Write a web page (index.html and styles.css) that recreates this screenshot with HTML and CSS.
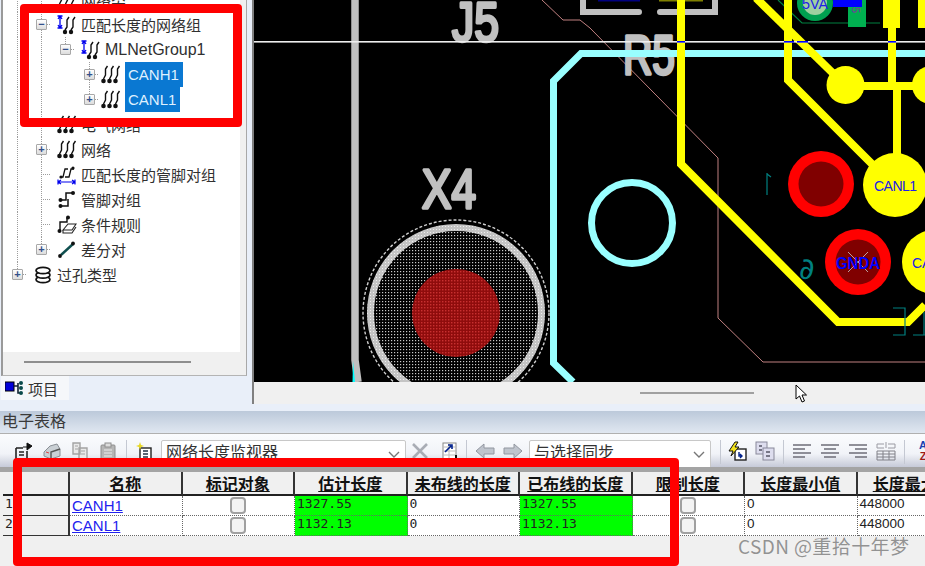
FILE: index.html
```html
<!DOCTYPE html>
<html lang="zh-CN">
<head>
<meta charset="utf-8">
<title>PCB</title>
<link rel="stylesheet" href="styles.css">
</head>
<body>
<svg class="defs" width="0" height="0">
  <defs>
    <symbol id="net" viewBox="0 0 20 20">
      <g fill="none" stroke="#111" stroke-width="1.4">
        <path d="M6.5 1 L4.5 4 V10 L2.5 14"/><path d="M12.5 1 L10.5 4 V10 L8.5 14"/><path d="M18.5 1 L16.5 4 V10 L14.5 14"/>
      </g>
      <circle cx="2.5" cy="16" r="2.3" fill="#111"/><circle cx="8.5" cy="16" r="2.3" fill="#111"/><circle cx="14.5" cy="16" r="2.3" fill="#111"/>
    </symbol>
    <symbol id="mlnet" viewBox="0 0 20 20">
      <path d="M3 1 V13 M0.5 1 H5.5 M0.5 13 H5.5 M3 1 L1 4 M3 1 L5 4 M3 13 L1 10 M3 13 L5 10" fill="none" stroke="#0000ee" stroke-width="1.3"/>
      <g fill="none" stroke="#111" stroke-width="1.4"><path d="M12 2 L10 5 V12 L8 15"/><path d="M18 2 L16 5 V12 L14 15"/></g>
      <circle cx="8" cy="17" r="2.2" fill="#111"/><circle cx="14" cy="17" r="2.2" fill="#111"/>
    </symbol>
    <symbol id="pinmatch" viewBox="0 0 20 20">
      <g fill="none" stroke="#111" stroke-width="1.3"><path d="M3 12 H6 L8 4 H11"/><path d="M8 12 H12 L14 4 H17"/></g>
      <circle cx="4" cy="12" r="1.6" fill="#111"/><circle cx="16" cy="3" r="1.6" fill="#111"/>
      <path d="M1 17 H18 M1 14.5 V19.5 M18 14.5 V19.5 M1 17 L4 15 M1 17 L4 19 M18 17 L15 15 M18 17 L15 19" fill="none" stroke="#0000ee" stroke-width="1.2"/>
    </symbol>
    <symbol id="pinpair" viewBox="0 0 20 20">
      <path d="M4 10 H9 V3 H15 M4 16 H11 V9" fill="none" stroke="#111" stroke-width="1.5"/>
      <circle cx="3.5" cy="10" r="2" fill="#111"/><circle cx="3.5" cy="16" r="2" fill="#111"/><circle cx="16" cy="3" r="2" fill="#111"/>
    </symbol>
    <symbol id="rule" viewBox="0 0 20 20">
      <path d="M3 16 V7 H10 V3" fill="none" stroke="#111" stroke-width="1.4"/>
      <circle cx="2.5" cy="16" r="2" fill="#111"/><circle cx="11" cy="2.5" r="2" fill="#111"/>
      <path d="M6 15 L11 9 H19 L15 15 Z M6 15 V18 H15 L19 12" fill="#fff" stroke="#222" stroke-width="1.1"/>
    </symbol>
    <symbol id="diff" viewBox="0 0 20 20">
      <path d="M4 15 L16 4" stroke="#0f4f4f" stroke-width="2.4"/>
      <circle cx="3" cy="16" r="1.9" fill="#111"/><circle cx="16" cy="3.5" r="1.9" fill="#111"/>
    </symbol>
    <symbol id="via" viewBox="0 0 20 20">
      <g fill="#fff" stroke="#111" stroke-width="1.7">
        <ellipse cx="10" cy="14.5" rx="7" ry="3.2"/><ellipse cx="10" cy="10" rx="7" ry="3.2"/><ellipse cx="10" cy="5.5" rx="7" ry="3.2"/>
      </g>
    </symbol>
    <pattern id="dots" width="3" height="3" patternUnits="userSpaceOnUse">
      <rect width="3" height="3" fill="#000"/><rect x="1" y="1" width="1.2" height="1.2" fill="#c8c8c8"/>
    </pattern>
    <pattern id="reddots" width="3" height="3" patternUnits="userSpaceOnUse">
      <rect width="3" height="3" fill="#8f0c0c"/><rect x="1" y="1" width="1.4" height="1.4" fill="#c83030"/>
    </pattern>
    <pattern id="ringdots" width="3" height="3" patternUnits="userSpaceOnUse">
      <rect width="3" height="3" fill="#c4c4c4"/><rect x="1" y="1" width="1" height="1" fill="#eee"/>
    </pattern>
  </defs>
</svg>

<div class="top">
  <aside class="side">
    <div class="frame">
      <div class="tree-wrap">
        <div class="tree">
          <div class="row"><span class="g v"></span><span class="g tv"></span><svg class="ico"><use href="#net"/></svg><span class="lbl">网络类</span></div>
          <div class="row"><span class="g v"></span><span class="g tv"><i class="box">−</i></span><svg class="ico"><use href="#mlnet"/></svg><span class="lbl">匹配长度的网络组</span></div>
          <div class="row"><span class="g v"></span><span class="g v"></span><span class="g tend"><i class="box">−</i></span><svg class="ico"><use href="#mlnet"/></svg><span class="lbl lat">MLNetGroup1</span></div>
          <div class="row"><span class="g v"></span><span class="g v"></span><span class="g"></span><span class="g tv"><i class="box">+</i></span><svg class="ico short"><use href="#net"/></svg><span class="sel">CANH1</span></div>
          <div class="row"><span class="g v"></span><span class="g v"></span><span class="g"></span><span class="g tend"><i class="box">+</i></span><svg class="ico short"><use href="#net"/></svg><span class="sel">CANL1</span></div>
          <div class="row"><span class="g v"></span><span class="g tv"></span><svg class="ico"><use href="#net"/></svg><span class="lbl">电气网络</span></div>
          <div class="row"><span class="g v"></span><span class="g tv"><i class="box">+</i></span><svg class="ico"><use href="#net"/></svg><span class="lbl">网络</span></div>
          <div class="row"><span class="g v"></span><span class="g tv"></span><svg class="ico"><use href="#pinmatch"/></svg><span class="lbl">匹配长度的管脚对组</span></div>
          <div class="row"><span class="g v"></span><span class="g tv"></span><svg class="ico"><use href="#pinpair"/></svg><span class="lbl">管脚对组</span></div>
          <div class="row"><span class="g v"></span><span class="g tv"></span><svg class="ico"><use href="#rule"/></svg><span class="lbl">条件规则</span></div>
          <div class="row"><span class="g v"></span><span class="g tend"><i class="box">+</i></span><svg class="ico"><use href="#diff"/></svg><span class="lbl">差分对</span></div>
          <div class="row"><span class="g tend"><i class="box">+</i></span><svg class="ico"><use href="#via"/></svg><span class="lbl">过孔类型</span></div>
        </div>
      </div>
      <div class="hscroll"><span class="thumb"></span></div>
    </div>
    <div class="tab">
      <svg class="tab-ico" viewBox="0 0 20 16"><rect x="0" y="2" width="9" height="9" fill="#0000d8" stroke="#000"/><path d="M9 6 H13 M13 3 V13 H16" fill="none" stroke="#123" stroke-width="1.6"/><circle cx="16" cy="3" r="2" fill="#0a4a4a"/><circle cx="16" cy="8" r="2" fill="#0a4a4a"/><circle cx="16" cy="13" r="2" fill="#0a4a4a"/></svg>
      <span>项目</span>
    </div>
    <div class="highlight tree-mark"></div>
  </aside>

  <main class="work">
    <svg class="board" viewBox="254 0 671 382" width="671" height="382">
      <rect x="254" y="0" width="671" height="382" fill="#000"/>
      <!-- board outline -->
      <path d="M542 0 L563 20 H580 L590 28 L718 158 V318 L763 362 H925" fill="none" stroke="#c08080" stroke-width="1"/>
      <path d="M778 0 L802 23 H880" fill="none" stroke="#008040" stroke-width="1.2"/>
      <!-- silkscreen -->
      <path d="M355 0 V360 L358 382" fill="none" stroke="#c0c0c0" stroke-width="7.5"/>
      <path d="M353 361 L352.5 382 H355 Z" fill="#00ffff"/>
      <path d="M583 0 V12 H639 M660 12 H715 V0" fill="none" stroke="#c0c0c0" stroke-width="6" stroke-linecap="round"/>
      <rect x="598" y="0" width="42" height="1.5" fill="#000080"/>
      <rect x="659" y="0" width="44" height="1.5" fill="#808000"/>
      <text class="silk" x="452" y="41" textLength="47" lengthAdjust="spacingAndGlyphs">J5</text>
      <text class="silk" x="623" y="74" textLength="52" lengthAdjust="spacingAndGlyphs">R5</text>
      <text class="silk" x="422" y="208" textLength="54" lengthAdjust="spacingAndGlyphs">X4</text>
      <!-- cyan outlines -->
      <path d="M925 53.5 H581 L553.5 81 V363 L573 382" fill="none" stroke="#99ffff" stroke-width="7"/>
      <circle cx="632" cy="223" r="40.5" fill="none" stroke="#99ffff" stroke-width="7"/>
      <!-- big hole -->
      <circle cx="456" cy="313" r="93" fill="none" stroke="#d0d0d0" stroke-width="1.4" stroke-dasharray="3 2"/>
      <circle cx="456" cy="313" r="85.5" fill="url(#dots)" stroke="url(#ringdots)" stroke-width="7"/>
      <circle cx="456" cy="313" r="44" fill="url(#reddots)"/>
      <!-- top parts -->
      <rect x="848" y="0" width="18" height="27" fill="#00b050"/>
      <rect x="833" y="0" width="29" height="7" fill="#0000ff"/>
      <circle cx="815" cy="3" r="18" fill="#00a050"/>
      <circle cx="815" cy="3" r="12" fill="#9fd0a0"/>
      <text class="padtxt" x="802" y="9" textLength="26" lengthAdjust="spacingAndGlyphs">5VA</text>
      <text class="vtxt" x="852" y="13" transform="rotate(90 855 10)">5</text>
      <!-- yellow traces -->
      <g fill="none" stroke="#ffff00" stroke-width="8">
        <path d="M681 0 V164 L838 322 H908 L925 305"/>
        <path d="M756 -2 L845 85"/>
        <path d="M788 0 V80 L880 172"/>
        <path d="M892 0 V85 M845 86 H925 M897 86 V155"/>
      </g>
      <rect x="883" y="0" width="17" height="28" fill="#ffff00"/>
      <rect x="918" y="0" width="7" height="28" fill="#ffff00"/>
      <circle cx="845.5" cy="85" r="19" fill="#ffff00"/>
      <circle cx="931" cy="85" r="19" fill="#ffff00"/>
      <circle cx="895" cy="185" r="32" fill="#ffff00"/>
      <circle cx="934" cy="262" r="32" fill="#ffff00"/>
      <text class="padtxt" x="874" y="191" textLength="43" lengthAdjust="spacing">CANL1</text>
      <text class="padtxt" x="912" y="268">CA</text>
      <!-- red pads -->
      <circle cx="821" cy="184" r="33" fill="#ff0000"/>
      <circle cx="821" cy="184" r="22.5" fill="#800000"/>
      <circle cx="858" cy="262" r="33" fill="#ff0000"/>
      <circle cx="858" cy="262" r="22.5" fill="#800000"/>
      <path d="M848 252 L868 272 M868 252 L848 272" stroke="#b8a0a0" stroke-width="1"/>
      <text class="gnd" x="836" y="269" textLength="44" lengthAdjust="spacingAndGlyphs">GNDA</text>
      <!-- teal marks -->
      <g fill="none" stroke="#008080" stroke-width="1.2">
        <path d="M767 173 V195 M767 174 L771 177"/>
        <path d="M893 308 H905 V335 H893 M913 335 H925 M924 312 V335"/>
      </g>
      <text class="teal" x="799" y="279">∂</text>
      <!-- crosshair -->
      <rect x="254" y="41" width="671" height="1.6" fill="#eee"/>
      <g fill="#0000ff">
        <rect x="677" y="41" width="8" height="1.6"/><rect x="784" y="41" width="10" height="1.6"/>
        <rect x="797" y="41" width="11" height="1.6"/><rect x="888" y="41" width="8" height="1.6"/>
      </g>
    </svg>
    <div class="vscroll"><span class="thumb2"></span></div>
  </main>
</div>

<section class="sheet">
  <div class="title">电子表格</div>
  <div class="toolbar">
    <span class="grip"></span>
    <span class="tbtn"><svg viewBox="0 0 20 20"><path d="M2 7 H9 M2 7 V18 H13 V10 M5 11 H10 M5 14 H10" fill="none" stroke="#222" stroke-width="1.6"/><path d="M9 6 H16 M13 2 L18 5 L13 9 Z" fill="#111" stroke="#111"/></svg></span>
    <span class="tbtn"><svg viewBox="0 0 20 20"><path d="M2 11 L8 5 L15 3 L18 8 V15 L9 18 L2 15 Z" fill="#c9cfd4" stroke="#8a8f95"/><path d="M9 18 V11 L18 8" fill="none" stroke="#555" stroke-width="1.4"/><path d="M4 11 L7 12" stroke="#d44" stroke-width="1"/></svg></span>
    <span class="tbtn"><svg viewBox="0 0 20 20"><path d="M3 2 H10 V13 H3 Z M9 7 H17 V18 H9 Z" fill="#e9e9e9" stroke="#a3a3a3" stroke-width="1.4"/><path d="M5 5 H8 M5 8 H8 M11 10 H15 M11 13 H15" stroke="#a3a3a3"/></svg></span>
    <span class="tbtn"><svg viewBox="0 0 20 20"><rect x="3" y="4" width="14" height="14" rx="1" fill="#b6b6b6" stroke="#8e8e8e"/><rect x="7" y="2" width="6" height="4" fill="#ddd" stroke="#8e8e8e"/><path d="M6 9 H14 M6 12 H14 M6 15 H14" stroke="#ececec"/></svg></span>
    <span class="sep"></span>
    <span class="tbtn"><svg viewBox="0 0 20 20"><rect x="5" y="7" width="11" height="11" fill="#fff" stroke="#222" stroke-width="1.4"/><path d="M8 10 H13 M8 13 H13 M8 16 H13" stroke="#234" stroke-width="1.4"/><path d="M5 1 L6 4 L9 5 L6 6 L5 9 L4 6 L1 5 L4 4 Z" fill="#e8d820"/></svg></span>
    <div class="combo wide"><span>网络长度监视器</span><svg class="chev" viewBox="0 0 12 8"><path d="M1 1 L6 6 L11 1" fill="none" stroke="#777" stroke-width="1.4"/></svg></div>
    <span class="tbtn"><svg viewBox="0 0 20 20"><path d="M3 3 L17 17 M17 3 L3 17" stroke="#a9adb5" stroke-width="2.6"/></svg></span>
    <span class="tbtn"><svg viewBox="0 0 20 20"><rect x="5" y="2" width="13" height="16" fill="#fff" stroke="#888"/><path d="M5 6 H18 M5 10 H18 M5 14 H18 M11 2 V18" stroke="#bbb"/><path d="M7 11 L13 5 M10 4 H14 V8" fill="none" stroke="#00208c" stroke-width="1.6"/><path d="M11 18 H18 V14" fill="none" stroke="#111" stroke-width="2"/></svg></span>
    <span class="sep"></span>
    <span class="tbtn"><svg viewBox="0 0 20 20"><path d="M1 10 L9 3 V7 H19 V13 H9 V17 Z" fill="#bfc4cd" stroke="#9297a0"/></svg></span>
    <span class="tbtn"><svg viewBox="0 0 20 20"><path d="M19 10 L11 3 V7 H1 V13 H11 V17 Z" fill="#bfc4cd" stroke="#9297a0"/></svg></span>
    <div class="combo narrow"><span>与选择同步</span><svg class="chev" viewBox="0 0 12 8"><path d="M1 1 L6 6 L11 1" fill="none" stroke="#777" stroke-width="1.4"/></svg></div>
    <span class="sep far"></span>
    <span class="tbtn"><svg viewBox="0 0 20 20"><rect x="8" y="8" width="11" height="11" fill="#fff" stroke="#222" stroke-width="1.4"/><path d="M12 11 V15 H15 M13 13 L15 15 L13 17" fill="none" stroke="#00208c" stroke-width="1.4"/><path d="M8 1 L2 10 H6 L4 15 L12 6 H8 L11 1 Z" fill="#f2e21d" stroke="#111"/></svg></span>
    <span class="tbtn"><svg viewBox="0 0 20 20"><rect x="1" y="1" width="11" height="12" fill="#dde" stroke="#889"/><rect x="8" y="7" width="11" height="12" fill="#dde" stroke="#889"/><path d="M4 5 H7 M4 9 H7 M11 11 H15 M11 15 H15" stroke="#556" stroke-width="1.6"/></svg></span>
    <span class="sep"></span>
    <span class="tbtn"><svg viewBox="0 0 20 20"><path d="M1 4 H19 M1 8 H13 M1 12 H19 M1 16 H13" stroke="#6e6e78" stroke-width="1.5"/></svg></span>
    <span class="tbtn"><svg viewBox="0 0 20 20"><path d="M1 4 H19 M4 8 H16 M1 12 H19 M4 16 H16" stroke="#6e6e78" stroke-width="1.5"/></svg></span>
    <span class="tbtn"><svg viewBox="0 0 20 20"><path d="M1 4 H19 M7 8 H19 M1 12 H19 M7 16 H19" stroke="#6e6e78" stroke-width="1.5"/></svg></span>
    <span class="tbtn"><svg viewBox="0 0 20 20"><path d="M1 3 H8 M12 3 H19 M1 3 V7 M19 3 V7 M10 1 V7 M1 7 H8 M12 7 H19" stroke="#9a9aa2"/><path d="M1 10 H19 V19 H1 Z M1 13 H19 M1 16 H19 M7 10 V19 M13 10 V19" fill="none" stroke="#808088"/></svg></span>
    <span class="sep"></span>
    <span class="tbtn az"><b class="a">A</b><b class="z">Z</b></span>
  </div>
  <div class="band"></div>
  <div class="grid">
    <div class="hd corner"></div>
    <div class="hd">名称</div><div class="hd">标记对象</div><div class="hd">估计长度</div><div class="hd">未布线的长度</div>
    <div class="hd">已布线的长度</div><div class="hd">限制长度</div><div class="hd">长度最小值</div><div class="hd">长度最大值</div>

    <div class="rh">1</div>
    <div class="c name"><a href="#a">CANH1</a></div><div class="c mid"><span class="chk"></span></div>
    <div class="c num ok">1327.55</div><div class="c num">0</div><div class="c num ok">1327.55</div>
    <div class="c mid"><span class="chk"></span></div><div class="c san">0</div><div class="c san">448000</div>

    <div class="rh">2</div>
    <div class="c name"><a href="#a">CANL1</a></div><div class="c mid"><span class="chk"></span></div>
    <div class="c num ok">1132.13</div><div class="c num">0</div><div class="c num ok">1132.13</div>
    <div class="c mid"><span class="chk"></span></div><div class="c san">0</div><div class="c san">448000</div>
  </div>
</section>

<div class="highlight grid-mark"></div>
<div class="mark">CSDN @重拾十年梦</div>
<svg class="cursor" viewBox="0 0 13 20" width="13" height="20"><path d="M1 1 V15 L4.5 12 L7 18 L9.5 17 L7 11 H11.5 Z" fill="#fff" stroke="#000" stroke-width="1"/></svg>
</body>
</html>
```

FILE: styles.css
```css
* { box-sizing: border-box; }
html, body { margin: 0; padding: 0; }
body {
  position: relative;
  width: 925px;
  height: 566px;
  overflow: hidden;
  display: flex;
  flex-direction: column;
  background: #e9eff9;
  font-family: "Noto Sans CJK SC", "Liberation Sans", sans-serif;
  color: #333;
}
.defs { position: absolute; }

/* upper area */
.top { display: flex; height: 404px; flex: none; }
.side { width: 252px; flex: none; position: relative; }
.frame {
  width: 246px;
  height: 376px;
  margin-left: 1px;
  border-left: 2px solid #9a9a9a;
  border-right: 1px solid #a8a8a8;
  border-bottom: 1px solid #b4b4b4;
  background: #f0f0f0;
  display: flex;
  flex-direction: column;
}
.tree-wrap { height: 352px; width: 237px; background: #fff; overflow: hidden; flex: none; }
.tree { margin-top: -13px; }
.row { display: flex; align-items: center; height: 25px; }
.g {
  width: 24px;
  height: 25px;
  flex: none;
  display: flex;
  align-items: center;
  padding-left: 9px;
  background-repeat: no-repeat;
}
.g.v {
  background-image: repeating-linear-gradient(to bottom, #9c9c9c 0 1px, transparent 1px 2px);
  background-size: 1px 100%;
  background-position: 14px 0;
}
.g.tv {
  background-image: repeating-linear-gradient(to bottom, #9c9c9c 0 1px, transparent 1px 2px), repeating-linear-gradient(to right, #9c9c9c 0 1px, transparent 1px 2px);
  background-size: 1px 100%, 10px 1px;
  background-position: 14px 0, 14px 50%;
}
.g.tend {
  background-image: repeating-linear-gradient(to bottom, #9c9c9c 0 1px, transparent 1px 2px), repeating-linear-gradient(to right, #9c9c9c 0 1px, transparent 1px 2px);
  background-size: 1px 50%, 10px 1px;
  background-position: 14px 0, 14px 50%;
}
.box {
  width: 11px;
  height: 11px;
  border: 1px solid #a8a8a8;
  border-radius: 1px;
  background: linear-gradient(#fff, #dcdcdc);
  color: #33508a;
  font: normal 700 11px/9px "Liberation Sans", sans-serif;
  text-align: center;
}
.ico { width: 20px; height: 20px; flex: none; margin: 0 4px 0 6px; }
.ico.short { margin: 0 4px 0 2px; }
.lbl { font-size: 15px; line-height: 20px; white-space: nowrap; color: #303030; }
.lat { font-family: "Liberation Sans", sans-serif; font-size: 16px; }
.sel {
  background: #0a78d2;
  color: #dff0ff;
  font: 15px/25px "Liberation Sans", sans-serif;
  padding: 0 4px 0 3px;
  height: 25px;
}
.hscroll { flex: 1; padding: 9px 0 0 21px; width: 237px; }
.thumb { display: block; width: 167px; height: 2px; background: #8e8e8e; }
.tab {
  width: 68px;
  height: 24px;
  margin: 0 0 0 1px;
  background: #f5f7fa;
  display: flex;
  align-items: center;
  padding-left: 4px;
  gap: 3px;
  font-size: 15px;
}
.tab-ico { width: 20px; height: 16px; }

.work {
  width: 673px;
  flex: none;
  border-left: 2px solid #808080;
  display: flex;
  flex-direction: column;
}
.board { display: block; flex: none; }
.vscroll { height: 22px; background: #f0f0f0; padding: 10px 0 0 386px; }
.thumb2 { display: block; width: 114px; height: 2px; background: #a0a0a0; }

.silk {
  font: 56px "Liberation Sans", sans-serif;
  fill: #c0c0c0;
  stroke: #c0c0c0;
  stroke-width: 3.5;
  stroke-linejoin: round;
}
.padtxt { font: 14px "Liberation Sans", sans-serif; fill: #2020e8; }
.vtxt { font: 11px "Liberation Sans", sans-serif; fill: #8030a0; }
.gnd { font: 700 17px "Liberation Sans", sans-serif; fill: #0000ff; }
.teal { font: 30px "DejaVu Sans", sans-serif; fill: #008080; }

/* spreadsheet */
.sheet { flex: 1; display: flex; flex-direction: column; margin-top: 7px; }
.title {
  height: 23px;
  flex: none;
  background: linear-gradient(#bcc9da, #e0e7f1);
  border-bottom: 1px solid #b0b0b0;
  padding-left: 2px;
  font-size: 16px;
  line-height: 19px;
  color: #3a3a3a;
}
.toolbar {
  height: 33px;
  flex: none;
  display: flex;
  align-items: flex-start;
  padding: 6px 0 0 12px;
  background: linear-gradient(#fbfcfe 0, #f1f3f8 60%, #c6cad8 100%);
  position: relative;
  overflow: hidden;
  white-space: nowrap;
}
.grip {
  width: 2px;
  height: 18px;
  margin: 3px 4px 0 -6px;
  background: repeating-linear-gradient(to bottom, #a5a5a5 0 2px, transparent 2px 4px);
}
.tbtn { width: 28px; height: 22px; flex: none; display: flex; align-items: center; justify-content: center; }
.tbtn svg { width: 20px; height: 20px; }
.az { flex-direction: column; font: 700 11px/11px "Liberation Sans", sans-serif; }
.a { color: #1a3fb0; }
.z { color: #a01818; }
.sep { width: 1px; height: 24px; margin: 0 4px; background: #c4c8d2; flex: none; }
.sep.far { margin: 0 2px 0 9px; }
.combo {
  height: 28px;
  flex: none;
  margin-left: 2px;
  background: #fff;
  border: 1px solid #c8c8c8;
  border-radius: 2px 2px 0 0;
  display: flex;
  justify-content: space-between;
  align-items: flex-start;
  padding: 0 5px 0 4px;
  font-size: 16px;
  line-height: 20px;
}
.combo.wide { width: 245px; }
.combo.narrow { width: 182px; }
.chev { width: 12px; height: 8px; margin-top: 10px; }
.band { height: 5px; flex: none; background: #a4a4a4; }
.grid {
  flex: 1;
  display: grid;
  grid-template-columns: 67px repeat(8, 112.5px);
  grid-template-rows: 24px 20px 20px;
  align-content: start;
  padding-left: 3px;
  background: #f0f0f0;
  overflow: hidden;
}
.hd {
  background: #f0f0f0;
  border-right: 2px solid #333;
  border-bottom: 2px solid #222;
  text-align: center;
  font-size: 16px;
  font-weight: 700;
  line-height: 22px;
  color: #111;
  text-decoration: underline;
  white-space: nowrap;
}
.hd.corner { text-decoration: none; }
.rh {
  background: #f0f0f0;
  border-right: 2px solid #333;
  border-bottom: 1px solid #333;
  font: 13px/16px "DejaVu Sans Mono", monospace;
  color: #222;
  padding-left: 2px;
}
.c {
  background: #fff;
  border-bottom: 1px dotted #666;
  border-right: 1px dotted #666;
  padding-left: 2px;
  font-size: 13px;
  line-height: 16px;
  color: #222;
  overflow: hidden;
  white-space: nowrap;
}
.name a { font: 15px/20px "Liberation Sans", sans-serif; color: #2222ee; }
.mid { display: flex; align-items: center; justify-content: center; padding-left: 0; }
.chk { width: 16px; height: 17px; border: 2px solid #a0a0a0; border-radius: 4px; background: #f3f3f3; }
.num { font-family: "DejaVu Sans Mono", monospace; }
.san { font-family: "Liberation Sans", sans-serif; font-size: 13.5px; }
.ok { background: #00ff00; }

/* overlays */
.highlight { position: absolute; border: 9px solid #ff0000; border-radius: 4px; pointer-events: none; }
.tree-mark { left: 20px; top: 4px; width: 222px; height: 123px; }
.grid-mark { left: 13px; top: 458px; width: 666px; height: 108px; }
.mark {
  position: absolute;
  left: 738px;
  top: 533px;
  font-size: 19px;
  line-height: 26px;
  letter-spacing: 0.4px;
  color: rgba(110, 110, 110, 0.72);
  white-space: nowrap;
}
.cursor { position: absolute; left: 795px; top: 384px; }
```
